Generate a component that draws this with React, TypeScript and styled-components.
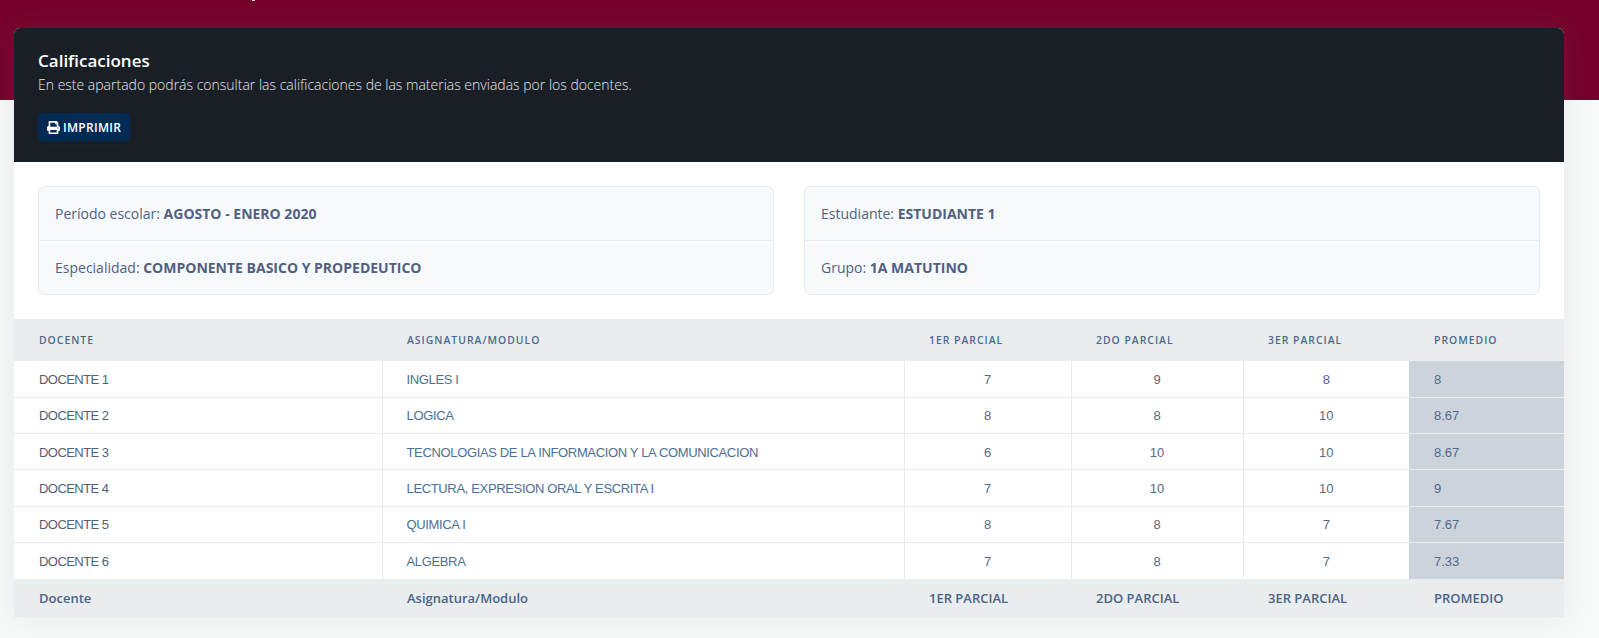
import { createGlobalStyle, styled } from "styled-components";
import { FaPrint } from "react-icons/fa";

const GlobalStyle = createGlobalStyle`
  html, body {
    margin: 0;
    padding: 0;
    background: #f8f9f9;
    font-family: "Open Sans", sans-serif;
    color: #525f7f;
  }
`;

type Grade = {
  teacher: string;
  subject: string;
  first: string;
  second: string;
  third: string;
  average: string;
};

const grades: Grade[] = [
  { teacher: "DOCENTE 1", subject: "INGLES I", first: "7", second: "9", third: "8", average: "8" },
  { teacher: "DOCENTE 2", subject: "LOGICA", first: "8", second: "8", third: "10", average: "8.67" },
  { teacher: "DOCENTE 3", subject: "TECNOLOGIAS DE LA INFORMACION Y LA COMUNICACION", first: "6", second: "10", third: "10", average: "8.67" },
  { teacher: "DOCENTE 4", subject: "LECTURA, EXPRESION ORAL Y ESCRITA I", first: "7", second: "10", third: "10", average: "9" },
  { teacher: "DOCENTE 5", subject: "QUIMICA I", first: "8", second: "8", third: "7", average: "7.67" },
  { teacher: "DOCENTE 6", subject: "ALGEBRA", first: "7", second: "8", third: "7", average: "7.33" },
];

const Page = styled.div`
  height: 638px;
  overflow: hidden;
`;

const Banner = styled.div`
  position: relative;
  height: 100px;
  background: #75002b;

  /* tail of a heading cut off by the top of the window */
  &::before {
    content: "";
    position: absolute;
    top: 0;
    left: 252px;
    width: 3px;
    height: 1px;
    background: #f3e3e8;
  }
`;

const Card = styled.section`
  position: relative;
  margin: -72px 35px 0 14px;
  background: #fff;
  border-radius: 6px 6px 0 0;
  box-shadow: 0 0 32px rgba(125, 135, 140, 0.14);
  overflow: hidden;
`;

const CardHeader = styled.header`
  height: 134px;
  box-sizing: border-box;
  padding: 23px 24px 0;
  background: #1a1f26;
`;

const Title = styled.h3`
  margin: 0;
  font-size: 17px;
  font-weight: 600;
  line-height: 19px;
  color: #fff;
`;

const Subtitle = styled.p`
  margin: 4px 0 0;
  font-size: 14px;
  font-weight: 300;
  line-height: 21px;
  color: #e4e8ee;
`;

const PrintButton = styled.button`
  display: flex;
  align-items: center;
  gap: 3px;
  height: 28px;
  margin-top: 18px;
  padding: 0 9px;
  border: 0;
  border-radius: 4px;
  background: #012a54;
  color: #fff;
  font-family: inherit;
  font-size: 12px;
  font-weight: 600;
  letter-spacing: 0.3px;
  text-transform: uppercase;
  box-shadow: 0 4px 6px rgba(50, 50, 93, 0.11);
`;

const InfoRow = styled.div`
  display: grid;
  grid-template-columns: 736px 736px;
  justify-content: space-between;
  padding: 24px;
`;

const InfoList = styled.ul`
  margin: 0;
  padding: 0;
  list-style: none;
  background: #f6fafd;
  border: 1px solid #e9ecef;
  border-radius: 6px;
`;

const InfoItem = styled.li`
  height: 53px;
  padding: 0 16px;
  display: flex;
  align-items: center;
  white-space: pre;
  font-size: 14px;
  font-weight: 400;

  & + & {
    border-top: 1px solid #e9ecef;
  }

  b {
    font-weight: 700;
  }
`;

const Table = styled.table`
  width: 100%;
  table-layout: fixed;
  border-collapse: collapse;
`;

const HeadCell = styled.th`
  height: 42px;
  padding: 0 0 0 25px;
  background: #e9edf0;
  text-align: left;
  font-size: 10.4px;
  font-weight: 600;
  letter-spacing: 1px;
  text-transform: uppercase;
  color: #4b6a8a;
`;

const FootCell = styled.th`
  height: 38px;
  padding: 0 0 0 25px;
  background: #e9edf0;
  text-align: left;
  font-size: 13px;
  font-weight: 600;
  color: #4a6387;
`;

const BodyRow = styled.tr`
  height: 36.33px;
  border-bottom: 1px solid #e9ecef;

  &:last-child {
    border-bottom: 0;
  }
`;

const BodyCell = styled.td<{ $center?: boolean }>`
  padding: 1px 0 0 ${(p) => (p.$center ? 0 : 24)}px;
  border-left: 1px solid #e9ecef;
  text-align: ${(p) => (p.$center ? "center" : "left")};
  font-family: "Liberation Sans", Arial, sans-serif;
  font-size: 13px;
  color: #5a6884;
`;

const TeacherCell = styled(BodyCell)`
  padding-left: 25px;
  border-left: 0;
  letter-spacing: -0.55px;
  color: #525f74;
`;

const SubjectCell = styled(BodyCell)`
  letter-spacing: -0.35px;
  color: #4c7094;
`;

const AverageCell = styled(BodyCell)`
  padding-left: 25px;
  background: #cdd3da;
  border-left: 0;
  color: #4f6b92;
`;

export default function App() {
  return (
    <>
      <GlobalStyle />
      <Page>
        <Banner />
        <Card>
          <CardHeader>
            <Title>Calificaciones</Title>
            <Subtitle>En este apartado podrás consultar las calificaciones de las materias enviadas por los docentes.</Subtitle>
            <PrintButton>
              <FaPrint size={13} />
              Imprimir
            </PrintButton>
          </CardHeader>
          <InfoRow>
            <InfoList>
              <InfoItem>Período escolar: <b>AGOSTO - ENERO 2020</b></InfoItem>
              <InfoItem>Especialidad: <b>COMPONENTE BASICO Y PROPEDEUTICO</b></InfoItem>
            </InfoList>
            <InfoList>
              <InfoItem>Estudiante: <b>ESTUDIANTE 1</b></InfoItem>
              <InfoItem>Grupo: <b>1A MATUTINO</b></InfoItem>
            </InfoList>
          </InfoRow>
          <Table>
            <colgroup>
              <col width={368} />
              <col width={522} />
              <col width={167} />
              <col width={172} />
              <col width={166} />
              <col width={155} />
            </colgroup>
            <thead>
              <tr>
                <HeadCell>Docente</HeadCell>
                <HeadCell>Asignatura/Modulo</HeadCell>
                <HeadCell>1er parcial</HeadCell>
                <HeadCell>2do parcial</HeadCell>
                <HeadCell>3er parcial</HeadCell>
                <HeadCell>Promedio</HeadCell>
              </tr>
            </thead>
            <tbody>
              {grades.map((g) => (
                <BodyRow key={g.teacher}>
                  <TeacherCell>{g.teacher}</TeacherCell>
                  <SubjectCell>{g.subject}</SubjectCell>
                  <BodyCell $center>{g.first}</BodyCell>
                  <BodyCell $center>{g.second}</BodyCell>
                  <BodyCell $center>{g.third}</BodyCell>
                  <AverageCell>{g.average}</AverageCell>
                </BodyRow>
              ))}
            </tbody>
            <tfoot>
              <tr>
                <FootCell>Docente</FootCell>
                <FootCell>Asignatura/Modulo</FootCell>
                <FootCell>1ER PARCIAL</FootCell>
                <FootCell>2DO PARCIAL</FootCell>
                <FootCell>3ER PARCIAL</FootCell>
                <FootCell>PROMEDIO</FootCell>
              </tr>
            </tfoot>
          </Table>
        </Card>
      </Page>
    </>
  );
}
